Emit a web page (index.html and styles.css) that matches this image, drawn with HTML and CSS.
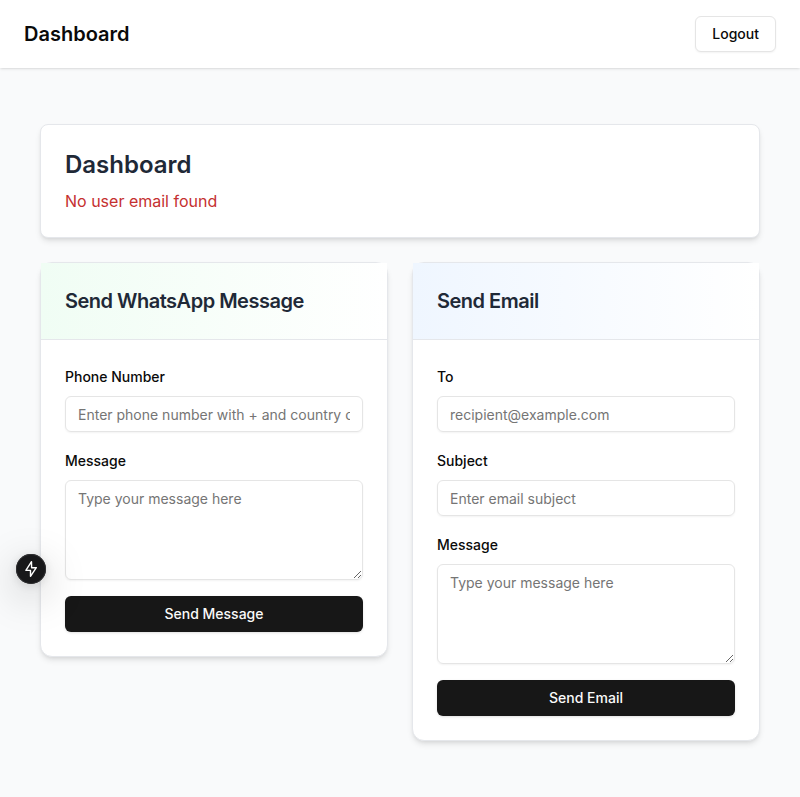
FILE: index.html
```html
<!DOCTYPE html>
<html lang="en">
<head>
<meta charset="utf-8">
<title>Dashboard</title>
<link rel="stylesheet" href="styles.css">
</head>
<body>
<header class="topbar">
  <h1 class="brand">Dashboard</h1>
  <button class="logout">Logout</button>
</header>
<main class="content">
  <section class="card intro">
    <h2 class="intro-title">Dashboard</h2>
    <p class="error">No user email found</p>
  </section>
  <div class="grid">
    <section class="card">
      <div class="card-head green"><h3>Send WhatsApp Message</h3></div>
      <form class="form">
        <div class="field">
          <label for="phone">Phone Number</label>
          <input id="phone" placeholder="Enter phone number with + and country code">
        </div>
        <div class="field">
          <label for="wa-message">Message</label>
          <textarea id="wa-message" placeholder="Type your message here"></textarea>
        </div>
        <button type="button" class="submit">Send Message</button>
      </form>
    </section>
    <section class="card">
      <div class="card-head blue"><h3>Send Email</h3></div>
      <form class="form">
        <div class="field">
          <label for="to">To</label>
          <input id="to" placeholder="recipient@example.com">
        </div>
        <div class="field">
          <label for="subject">Subject</label>
          <input id="subject" placeholder="Enter email subject">
        </div>
        <div class="field">
          <label for="mail-message">Message</label>
          <textarea id="mail-message" placeholder="Type your message here"></textarea>
        </div>
        <button type="button" class="submit">Send Email</button>
      </form>
    </section>
  </div>
</main>
<div class="indicator">
  <svg width="18" height="18" viewBox="0 0 18 18" fill="none"><path d="M9.5 1.7 3.9 10.4h4.6v5.9l5.8-8.6H9.6z" stroke="#fff" stroke-width="1.4" stroke-linejoin="round"/></svg>
</div>
</body>
</html>
```
FILE: styles.css
```css
* { box-sizing: border-box; margin: 0; padding: 0; }
body {
  min-height: 797px;
  background: #f9fafb;
  color: #0a0a0a;
  font-family: Inter, "Liberation Sans", sans-serif;
  font-size: 16px;
  line-height: 24px;
  -webkit-font-smoothing: antialiased;
}
button, input, textarea { font: inherit; }
.topbar {
  display: flex;
  align-items: center;
  justify-content: space-between;
  height: 68px;
  padding: 0 24px;
  background: #fff;
  box-shadow: 0 1px 3px rgba(0,0,0,.1), 0 1px 2px -1px rgba(0,0,0,.1);
}
.brand { font-size: 20px; line-height: 28px; font-weight: 600; }
.logout {
  height: 36px;
  padding: 0 16px;
  border: 1px solid #e5e5e5;
  border-radius: 6px;
  background: #fff;
  color: #0a0a0a;
  font-size: 14px;
  font-weight: 500;
  line-height: 20px;
  box-shadow: 0 1px 2px rgba(0,0,0,.05);
}
.content { padding: 56px 40px; }
.card {
  background: #fff;
  border: 1px solid #e5e7eb;
  border-radius: 12px;
  box-shadow: 0 4px 6px -1px rgba(0,0,0,.1), 0 2px 4px -2px rgba(0,0,0,.1);
}
.intro { height: 114px; padding: 24px; border-radius: 8px; }
.intro-title { font-size: 24px; line-height: 32px; font-weight: 600; color: #1f2937; margin-bottom: 8px; }
.error { color: #c53030; }
.grid {
  display: grid;
  grid-template-columns: 1fr 1fr;
  align-items: start;
  gap: 24px;
  margin-top: 24px;
}
.card-head { height: 77px; padding: 24px; border-bottom: 1px solid #e5e7eb; }
.card-head h3 { font-size: 20px; line-height: 28px; font-weight: 600; letter-spacing: -.5px; color: #1f2937; }
.green { background: linear-gradient(to right, #f0fdf4, #fff); }
.blue { background: linear-gradient(to right, #eff6ff, #fff); }
.form { display: flex; flex-direction: column; gap: 16px; padding: 24px; }
.field { display: flex; flex-direction: column; gap: 7px; }
.field label { padding-top: 1px; font-size: 14px; line-height: 24px; font-weight: 500; }
.field input, .field textarea {
  display: block;
  width: 100%;
  border: 1px solid #e5e5e5;
  border-radius: 6px;
  background: transparent;
  font-size: 14px;
  line-height: 20px;
  box-shadow: 0 1px 2px rgba(0,0,0,.05);
}
.field input { height: 36px; padding: 4px 12px; }
.field textarea { height: 100px; padding: 8px 12px; resize: vertical; }
::placeholder { color: #757575; }
.submit {
  height: 36px;
  border: 0;
  border-radius: 6px;
  background: #171717;
  color: #fafafa;
  font-size: 14px;
  font-weight: 500;
  line-height: 20px;
  box-shadow: 0 1px 3px rgba(0,0,0,.1), 0 1px 2px -1px rgba(0,0,0,.1);
}
.indicator {
  position: absolute;
  left: 16px;
  top: 554px;
  display: flex;
  align-items: center;
  justify-content: center;
  width: 30px;
  height: 30px;
  border-radius: 50%;
  background: #18181a;
  box-shadow: inset 0 0 0 1px #303032, 0 11px 40px 0 rgba(0,0,0,.25), 0 2px 10px 0 rgba(0,0,0,.12);
}
```
